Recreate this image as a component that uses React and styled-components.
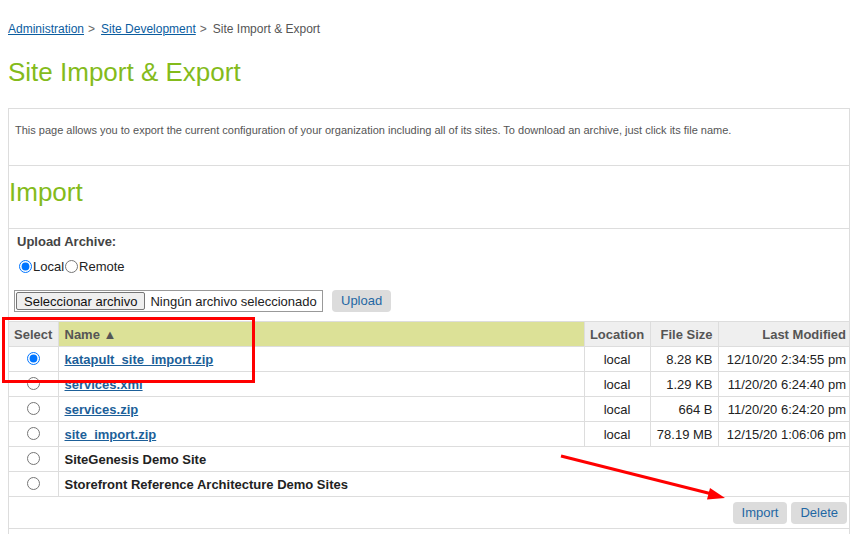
import React from "react"
import styled, { createGlobalStyle } from "styled-components"

const GlobalStyle = createGlobalStyle`
  html, body {
    margin: 0;
    padding: 0;
    background: #fff;
    font-family: "Liberation Sans", Arial, sans-serif;
    overflow: hidden;
  }
`

const files = [
  { name: "katapult_site_import.zip", location: "local", size: "8.28 KB", modified: "12/10/20 2:34:55 pm", checked: true },
  { name: "services.xml", location: "local", size: "1.29 KB", modified: "11/20/20 6:24:40 pm" },
  { name: "services.zip", location: "local", size: "664 B", modified: "11/20/20 6:24:20 pm" },
  { name: "site_import.zip", location: "local", size: "78.19 MB", modified: "12/15/20 1:06:06 pm" },
]

const sites = ["SiteGenesis Demo Site", "Storefront Reference Architecture Demo Sites"]

const Page = styled.div`
  position: relative;
  width: 854px;
  height: 534px;
  padding: 0 4px 0 8px;
  box-sizing: border-box;
`

const Breadcrumb = styled.div`
  padding-top: 22px;
  font-size: 12px;
  line-height: 14px;
  color: #555;
  a {
    color: #0b5d9f;
    text-decoration: underline;
  }
  span.sep {
    margin: 0 6px 0 4px;
    color: #666;
  }
`

const Title = styled.h1`
  margin: 21px 0 0;
  font-size: 26px;
  line-height: 30px;
  font-weight: normal;
  color: #84bb1b;
`

const Box = styled.div`
  margin-top: 21px;
  border: 1px solid #ddd;
  border-bottom: none;
  height: 430px;
`

const Section = styled.div`
  border-top: ${p => (p.first ? "none" : "1px solid #ddd")};
  padding: ${p => p.pad};
`

const Intro = styled.p`
  margin: 0;
  font-size: 11px;
  line-height: 13px;
  color: #555;
`

const Heading = styled.h2`
  margin: 0;
  font-size: 26px;
  line-height: 30px;
  font-weight: normal;
  color: #84bb1b;
`

const Label = styled.div`
  padding-left: 8px;
  font-size: 13px;
  line-height: 15px;
  font-weight: bold;
  color: #444;
`

const RadioRow = styled.div`
  display: flex;
  align-items: center;
  margin-top: 10px;
  padding-left: 10px;
  font-size: 13px;
  color: #222;
  label {
    display: flex;
    align-items: center;
  }
  input {
    margin: 0 1px 0 0;
    width: 13px;
    height: 13px;
  }
`

const UploadRow = styled.div`
  display: flex;
  align-items: center;
  margin-top: 16px;
  padding-left: 5px;
  gap: 9px;
`

const FileBox = styled.div`
  display: flex;
  align-items: center;
  width: 309px;
  height: 22px;
  box-sizing: border-box;
  border: 1px solid #999;
  padding: 0 1px;
  font-size: 13px;
  color: #222;
  white-space: nowrap;
  overflow: hidden;
`

const FileButton = styled.span`
  display: inline-block;
  height: 18px;
  line-height: 17px;
  box-sizing: border-box;
  padding: 0 7px;
  margin-right: 5px;
  border: 1px solid #767676;
  border-radius: 2px;
  background: #efefef;
  color: #111;
`

const Button = styled.button`
  height: 22px;
  padding: 0 9px;
  border: none;
  border-radius: 4px;
  background: #dcdcdc;
  color: #1f67a3;
  font-family: "Liberation Sans", Arial, sans-serif;
  font-size: 13px;
  line-height: 22px;
`

const Table = styled.table`
  width: 100%;
  margin-top: 9px;
  border-collapse: collapse;
  table-layout: fixed;
  font-size: 13px;
  th, td {
    height: 24px;
    padding: 0 5px;
    border: 1px solid #ddd;
    white-space: nowrap;
    overflow: hidden;
  }
  th:nth-child(2), td:nth-child(2) { padding-left: 6px; }
  tr > :first-child { border-left: none; }
  tr > :last-child { border-right: none; padding-right: 3px; }
`

const Th = styled.th`
  background: ${p => (p.active ? "#dce197" : "#efefef")};
  color: #555;
  font-weight: bold;
  text-align: ${p => p.align || "left"};
`

const Td = styled.td`
  color: #222;
  text-align: ${p => p.align || "left"};
  font-weight: ${p => (p.bold ? "bold" : "normal")};
  input {
    margin: 0;
    width: 13px;
    height: 13px;
    vertical-align: -1px;
  }
`

const FileLink = styled.a`
  color: #1c5f99;
  font-weight: bold;
  text-decoration: underline;
`

const Actions = styled.div`
  display: flex;
  justify-content: flex-end;
  gap: 4px;
  padding: 5px 2px 4px 0;
  border-bottom: 1px solid #ddd;
`

const Highlight = styled.div`
  position: absolute;
  left: 2px;
  top: 317px;
  width: 247px;
  height: 60px;
  border: 3px solid #f00;
  pointer-events: none;
`

const ArrowSvg = styled.svg`
  position: absolute;
  left: 0;
  top: 0;
  pointer-events: none;
`

const App = () => (
  <>
    <GlobalStyle />
    <Page>
      <Breadcrumb>
        <a>Administration</a>
        <span className="sep">&gt;</span>
        <a>Site Development</a>
        <span className="sep">&gt;</span>
        Site Import &amp; Export
      </Breadcrumb>
      <Title>Site Import &amp; Export</Title>
      <Box>
        <Section first pad="15px 6px 28px">
          <Intro>
            This page allows you to export the current configuration of your organization including all of its sites. To download an archive, just click its file name.
          </Intro>
        </Section>
        <Section pad="11px 0 21px">
          <Heading>Import</Heading>
        </Section>
        <Section pad="5px 0 0">
          <Label>Upload Archive:</Label>
          <RadioRow>
            <label><input type="radio" name="src" defaultChecked />Local</label>
            <label><input type="radio" name="src" style={{ marginLeft: 1 }} />Remote</label>
          </RadioRow>
          <UploadRow>
            <FileBox>
              <FileButton>Seleccionar archivo</FileButton>
              Ningún archivo seleccionado
            </FileBox>
            <Button>Upload</Button>
          </UploadRow>
          <Table>
            <colgroup>
              <col style={{ width: 49 }} />
              <col style={{ width: 526 }} />
              <col style={{ width: 66 }} />
              <col style={{ width: 68 }} />
              <col style={{ width: 131 }} />
            </colgroup>
            <thead>
              <tr>
                <Th align="center">Select</Th>
                <Th active>Name ▲</Th>
                <Th align="center">Location</Th>
                <Th align="right">File Size</Th>
                <Th align="right">Last Modified</Th>
              </tr>
            </thead>
            <tbody>
              {files.map(f => (
                <tr key={f.name}>
                  <Td align="center"><input type="radio" name="pick" defaultChecked={f.checked} /></Td>
                  <Td><FileLink>{f.name}</FileLink></Td>
                  <Td align="center">{f.location}</Td>
                  <Td align="right">{f.size}</Td>
                  <Td align="right">{f.modified}</Td>
                </tr>
              ))}
              {sites.map(s => (
                <tr key={s}>
                  <Td align="center"><input type="radio" name="pick" /></Td>
                  <Td bold colSpan={4}>{s}</Td>
                </tr>
              ))}
            </tbody>
          </Table>
          <Actions>
            <Button>Import</Button>
            <Button>Delete</Button>
          </Actions>
        </Section>
      </Box>
      <Highlight />
      <ArrowSvg width="854" height="534" viewBox="0 0 854 534">
        <line x1="561" y1="456" x2="712" y2="494" stroke="#f00" strokeWidth="3" />
        <polygon points="725,498 707,499.5 710,488" fill="#f00" />
      </ArrowSvg>
    </Page>
  </>
)

export default App
